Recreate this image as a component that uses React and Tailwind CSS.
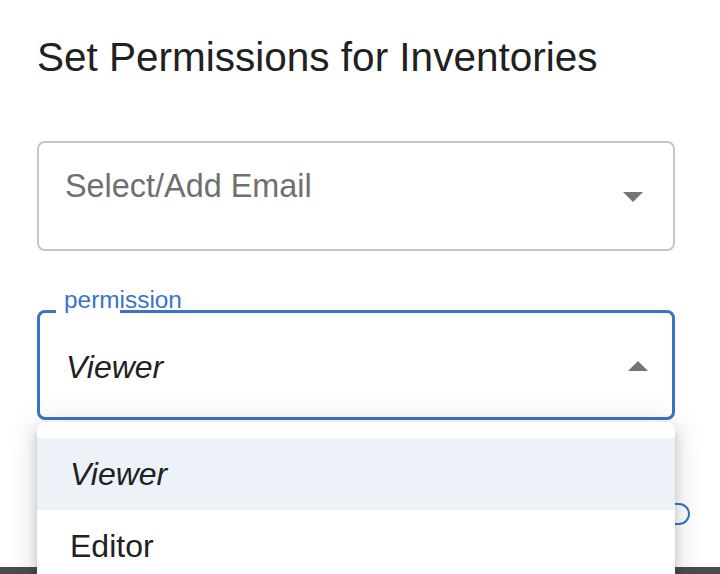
import React from 'react'

function Caret({ up }) {
  return (
    <svg width="20" height="10" viewBox="0 0 20 10" className="shrink-0">
      <polygon points={up ? '0,10 20,10 10,0' : '0,0 20,0 10,10'} fill="#757575" />
    </svg>
  )
}

export default function App() {
  return (
    <div className="relative h-[574px] w-[720px] overflow-hidden bg-white font-['Liberation_Sans',Arial,sans-serif] flex flex-col">
      <div className="h-[567px] shrink-0 pl-[37px] pt-[33px]">
        <h2 className="text-[40.5px] leading-[48px] text-[#212121]">Set Permissions for Inventories</h2>

        <div className="mt-[60px] w-[638px] h-[110px] border-2 border-[#c6c6c6] rounded-[8px] flex">
          <span className="flex-1 pl-[26px] pt-[23px] text-[32.4px] leading-[40px] text-[#6f6f6f]">Select/Add Email</span>
          <div className="self-center mr-[30px] mt-[1px]">
            <Caret />
          </div>
        </div>

        <div className="relative mt-[59px] w-[638px] h-[110px] border-[3px] border-[#3a73c8] rounded-[8px] flex items-center">
          <span className="absolute left-[16px] -top-[3px] w-[64px] h-[4px] bg-white" />
          <span className="absolute left-[24px] -top-[27px] text-[24.4px] leading-[28px] text-[#3a73c8]">permission</span>
          <span className="flex-1 pl-[26px] mt-[4px] text-[32px] leading-[40px] italic text-[#212121]">Viewer</span>
          <div className="mr-[24px] mt-[1px]">
            <Caret up />
          </div>
        </div>

        <div className="mt-[83px] w-[653px] flex justify-end">
          <button className="h-[22px] w-[180px] border-2 border-[#3a73c8] rounded-full" />
        </div>
      </div>
      <div className="flex-1 bg-[#4d4d4d]" />

      <div className="absolute left-[37px] top-[422px] w-[638px] h-[200px] bg-white rounded-t-[8px] pt-[16px] shadow-[0_5px_5px_-3px_rgba(0,0,0,0.2),0_8px_10px_1px_rgba(0,0,0,0.14),0_3px_28px_4px_rgba(0,0,0,0.12)]">
        <div className="h-[72px] bg-[#edf2f9] pl-[33px] flex items-center">
          <span className="text-[32px] leading-[40px] italic text-[#212121]">Viewer</span>
        </div>
        <div className="h-[72px] pl-[33px] flex items-center">
          <span className="text-[32px] leading-[40px] text-[#212121]">Editor</span>
        </div>
      </div>
    </div>
  )
}
